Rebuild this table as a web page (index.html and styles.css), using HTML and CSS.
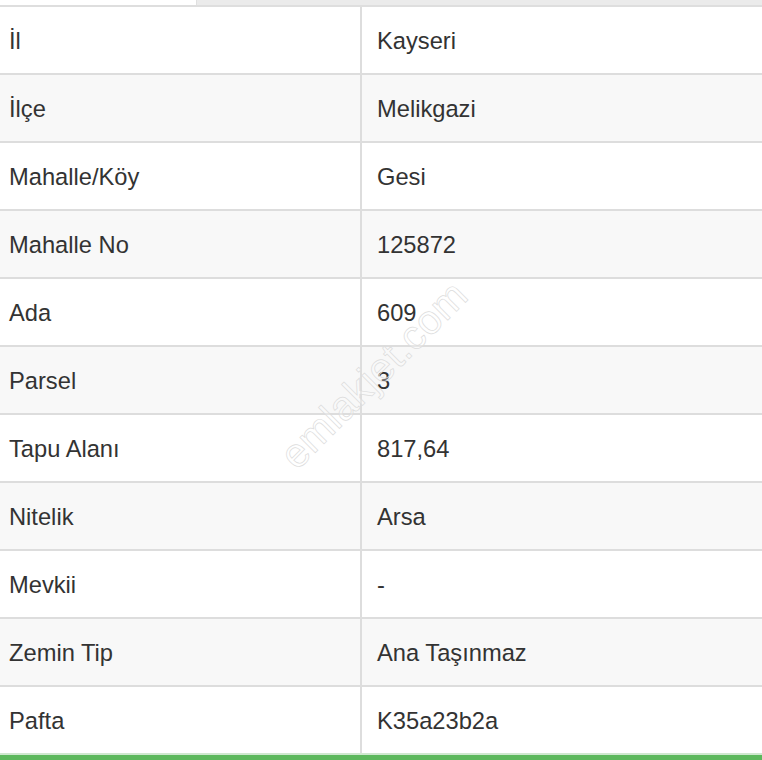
FILE: index.html
```html
<!DOCTYPE html>
<html lang="tr">
<head>
<meta charset="utf-8">
<title>Tapu Bilgileri</title>
<link rel="stylesheet" href="styles.css">
</head>
<body>
<div class="page">
  <div class="tabs">
    <div class="tab tab-active"></div>
    <div class="tab tab-rest"></div>
  </div>
  <div class="table">
    <div class="row"><div class="cell label">İl</div><div class="cell value">Kayseri</div></div>
    <div class="row alt"><div class="cell label">İlçe</div><div class="cell value">Melikgazi</div></div>
    <div class="row"><div class="cell label">Mahalle/Köy</div><div class="cell value">Gesi</div></div>
    <div class="row alt"><div class="cell label">Mahalle No</div><div class="cell value">125872</div></div>
    <div class="row"><div class="cell label">Ada</div><div class="cell value">609</div></div>
    <div class="row alt"><div class="cell label">Parsel</div><div class="cell value">3</div></div>
    <div class="row"><div class="cell label">Tapu Alanı</div><div class="cell value">817,64</div></div>
    <div class="row alt"><div class="cell label">Nitelik</div><div class="cell value">Arsa</div></div>
    <div class="row"><div class="cell label">Mevkii</div><div class="cell value">-</div></div>
    <div class="row alt"><div class="cell label">Zemin Tip</div><div class="cell value">Ana Taşınmaz</div></div>
    <div class="row last"><div class="cell label">Pafta</div><div class="cell value">K35a23b2a</div></div>
  </div>
  <div class="green-bar"></div>
  <div class="watermark">emlakjet.com</div>
</div>
</body>
</html>
```
FILE: styles.css
```css
html, body {
  margin: 0;
  padding: 0;
  background: #ffffff;
}

.page {
  position: relative;
  width: 762px;
  height: 760px;
  overflow: hidden;
  font-family: "Liberation Sans", Arial, sans-serif;
  color: #333333;
}

.tabs {
  display: flex;
  height: 5px;
  border-bottom: 2px solid #dedede;
}

.tab-active {
  width: 196px;
  background: #ffffff;
  border-right: 1px solid #e0e0e0;
}

.tab-rest {
  flex: 1;
  background: #ebebeb;
}

.table {
  display: flex;
  flex-direction: column;
}

.row {
  display: grid;
  grid-template-columns: 362px 1fr;
  height: 66px;
  border-bottom: 2px solid #dddddd;
  background: #ffffff;
}

.row.alt {
  background: #f8f8f8;
}

.row.last {
  border-bottom-color: #cfe8cf;
}

.cell {
  display: flex;
  align-items: center;
  padding-top: 3px;
  font-size: 23.7px;
  white-space: nowrap;
}

.label {
  padding-left: 9px;
  border-right: 2px solid #dddddd;
}

.value {
  padding-left: 15px;
}

.green-bar {
  height: 5px;
  background: #5cb85c;
}

.watermark {
  position: absolute;
  left: 374px;
  top: 375px;
  transform: translate(-50%, -50%) rotate(-45deg);
  font-size: 41px;
  color: rgba(255, 255, 255, 0.3);
  -webkit-text-stroke: 0.7px #dcdcdc;
  white-space: nowrap;
  pointer-events: none;
  letter-spacing: 0.3px;
}
```
